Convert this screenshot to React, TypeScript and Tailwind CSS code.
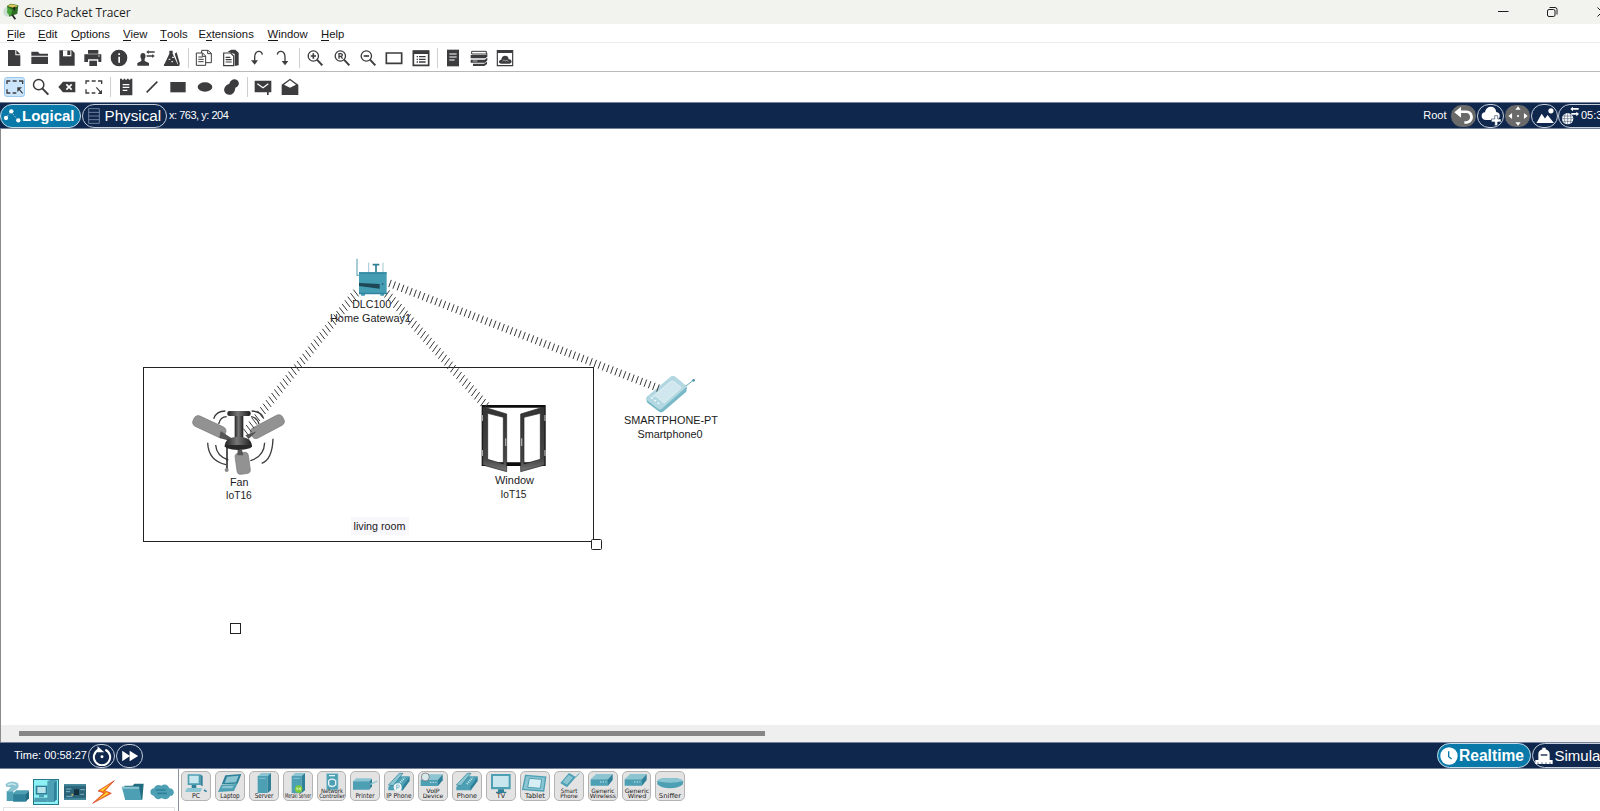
import React from "react";

type Kids = { children: React.ReactNode };
const DARK = "#3c3c3f";

function Tool({ children, active }: Kids & { active?: boolean }) {
  return (
    <div className="flex w-[26.3px] shrink-0 items-center justify-center">
      <div className={active ? "flex rounded-[3px] border border-[#9cc8ee] bg-[#cbe5fb] px-[0.5px]" : "flex"}>
        <svg width="18" height="18" viewBox="0 0 54 54" fill={DARK} stroke="none">{children}</svg>
      </div>
    </div>
  );
}
const Sep = () => <div className="ml-[3px] mr-[2px] h-[20px] w-px shrink-0 bg-[#cfcfcf]" />;

function Lens({ children }: Kids) {
  return (
    <g fill="none" stroke={DARK} strokeWidth="4">
      <circle cx="22" cy="21" r="15.5" />
      <path d="M33 32L49 49" strokeWidth="6" />
      {children}
    </g>
  );
}

const Person = () => (
  <>
    <path d="M1 50V42l12-6V30c-5-8-3-18 5-18s10 10 5 18v6l13 6v8z" />
    <path d="M28 9l7-6v4h18v4H35v4zM53 21l-7-6v4H29v4h17v4z" />
  </>
);

function TopTools() {
  return (
    <div className="flex h-[29px] items-center border-b border-[#b9b9b9] pl-[1px] pt-px">
      <Tool><path d="M9 3h22v16h15v32H9z" /><path d="M34 3l12 13H34z" /></Tool>
      <Tool><path d="M1 8h20l5 6h25v6H1zM1 23h50v22H1z" /></Tool>
      <Tool><path d="M4 4h38l8 8v38H4z" /><path d="M15 4h25v18H15z" fill="#fff" /><path d="M28 5h9v13h-9z" /></Tool>
      <Tool>
        <path d="M12 3h31v11H12zM1 16h51v23H43v-8H12v8H1z" /><path d="M16 35h23v16H16z" />
        <circle cx="45" cy="21" r="2" fill="#fff" />
      </Tool>
      <Tool><circle cx="27" cy="27" r="25" /><path d="M25 23h5v18h-5zM25 13h5v5h-5z" fill="#fff" /></Tool>
      <Tool><Person /></Tool>
      <Tool>
        <path d="M2 50L19 14V5h10v9l17 36z" /><path d="M35 14l6-4 10 36-5 2z" />
        <path d="M3 46h46v5H3z" /><path d="M17 31l5 0M27 25h6M25 38h5" stroke="#fff" strokeWidth="3" />
      </Tool>
      <Sep />
      <Tool>
        <g fill="#fff" stroke={DARK} strokeWidth="3">
          <path d="M20 4h19l10 9v28H20z" /><path d="M4 12h19l9 9v28H4z" />
          <path d="M10 24h13M10 31h16M10 38h16M38 5v9h10M22 13v9h9" fill="none" />
        </g>
      </Tool>
      <Tool>
        <path d="M17 8l11-6h12l10 9v38l-12 2V15z" />
        <g fill="#fff" stroke={DARK} strokeWidth="3.5"><path d="M5 12h21l9 9v29H5z" /><path d="M11 25h14M11 32h18M11 39h18" /></g>
      </Tool>
      <Tool><path d="M20 41V25C20 3 42 2 43 17" fill="none" stroke={DARK} strokeWidth="4" /><path d="M9 34h21L20 47z" /></Tool>
      <Tool><path d="M10 17C11 2 33 3 33 25v15" fill="none" stroke={DARK} strokeWidth="4" /><path d="M23 36h20L33 49z" /></Tool>
      <Sep />
      <Tool><Lens><path d="M22 13v16M14 21h16" strokeWidth="5" /></Lens></Tool>
      <Tool><Lens><path d="M18 29V14h5q5 0 5 4t-5 4h-4m4 0l6 7" /></Lens></Tool>
      <Tool><Lens><path d="M14 21h16" strokeWidth="5" /></Lens></Tool>
      <Tool><path d="M4 12h46v31H4z" fill="none" stroke={DARK} strokeWidth="5" /></Tool>
      <Tool>
        <path d="M4 6h46v43H4z" fill="none" stroke={DARK} strokeWidth="5" /><path d="M4 5h46v10H4z" />
        <path d="M14 23h4M21 23h20M14 31h4M21 31h20M14 39h4M21 39h20" stroke={DARK} strokeWidth="4" />
      </Tool>
      <Sep />
      <Tool><path d="M9 2h36v50H9z" /><path d="M16 15h22M16 24h22M16 33h16" stroke="#fff" strokeWidth="3.5" /></Tool>
      <Tool>
        <path d="M5 7h44v8H5z" fill="#fff" stroke={DARK} strokeWidth="3" />
        <path d="M2 18h46l4-7v12l-6 5H2zM2 32h42l8-6v8l-7 7H2zM9 44h33l9-6v7l-8 6H9z" />
        <path d="M8 36h14" stroke="#fff" strokeWidth="2" />
      </Tool>
      <Tool>
        <path d="M4 5h46v45H4z" fill="none" stroke={DARK} strokeWidth="3.5" /><path d="M4 4h46v8H4z" />
        <path d="M16 44c-10 0-9-12 0-12 0-15 22-15 22-1 11-1 12 13 1 13z" />
        <path d="M20 36q4-7 8 0m0 0q6-6 9 2" stroke="#fff" strokeWidth="1.5" fill="none" />
      </Tool>
    </div>
  );
}

const Marquee = ({ open }: { open?: boolean }) => (
  <g fill="none" stroke={DARK} strokeWidth="4">
    <path d="M3 18v-9h10M20 9h12M39 9h11v9M3 34v11h10M20 45h11" />
    <path d={open ? "M34 28L49 45" : "M37 31L50 46"} strokeWidth="3.5" />
    <path d={open ? "M51 35v13H38z" : "M34 42V28h14z"} fill={DARK} stroke="none" />
  </g>
);

function DrawTools() {
  return (
    <div className="flex h-[30px] items-center pl-[1.5px]">
      <Tool active><Marquee /></Tool>
      <Tool><g fill="none" stroke={DARK} strokeWidth="4.5"><circle cx="20" cy="20" r="15.5" /><path d="M31 31L49 50" strokeWidth="6" /></g></Tool>
      <Tool><path d="M1 27L15 11h37v32H15z" /><path d="M25 19l16 16M41 19L25 35" stroke="#fff" strokeWidth="5" /></Tool>
      <Tool><Marquee open /></Tool>
      <Sep />
      <Tool><path d="M9 2h6v3h5V2h5v3h5V2h5v3h5V2h6v50H9z" /><path d="M17 20h20M17 28h20M17 37h14" stroke="#fff" strokeWidth="3.5" /></Tool>
      <Tool><path d="M11 43L43 11" stroke={DARK} strokeWidth="5" /></Tool>
      <Tool><path d="M4 12h46v31H4z" /></Tool>
      <Tool><ellipse cx="27" cy="27" rx="22" ry="14" /></Tool>
      <Tool><path d="M22 17C25 5 38 0 46 7s5 19-6 22c-1 17-14 26-27 19C1 40 6 21 22 17z" /></Tool>
      <Sep />
      <Tool><path d="M2 8h50v35h-8v8h-5v-8H2z" /><path d="M10 17l17 12 16-12" fill="none" stroke="#fff" strokeWidth="3.5" /></Tool>
      <Tool><path d="M2 20L27 2l25 18v31H2z" /><path d="M9 20L27 7l18 13-18 9z" fill="#fff" /></Tool>
    </div>
  );
}

const MENU: [string, string][] = [
  ["File", "w-[31px]"], ["Edit", "w-[33px]"], ["Options", "w-[52px]"], ["View", "w-[37px]"],
  ["Tools", "w-[38.5px]"], ["Extensions", "w-[69px]"], ["Window", "w-[53.5px]"], ["Help", "w-[40px]"],
];

const Key = ({ children }: Kids) => <span className="inline-block border-b border-[#151515] leading-[12px]">{children}</span>;

function Round({ children, gray }: Kids & { gray?: boolean }) {
  return (
    <div className={"flex h-[24px] w-[27px] shrink-0 items-center justify-center rounded-full border " + (gray ? "border-[#0f274c] bg-[#6a6a6a]" : "border-[#c3cddb]")}>
      <svg width="20" height="20" viewBox="3 3 54 54" fill="#fff" className="shrink-0">{children}</svg>
    </div>
  );
}

function NavBar() {
  return (
    <div className="flex h-[27px] items-center border-y border-[#76819a] bg-[#0f274c] text-white">
      <div className="flex h-[24px] w-[80.5px] shrink-0 items-center rounded-full border border-[#c6dbe8] bg-[#0879a8] pl-[2px]">
        <svg width="19" height="18" viewBox="0 0 57 54" className="shrink-0" fill="#fff">
          <path d="M8 34L24 13l21 28" fill="none" stroke="#fff" strokeWidth="2" strokeDasharray="4 5" />
          <circle cx="9" cy="33" r="6.5" /><circle cx="25" cy="13" r="6.5" /><circle cx="46" cy="40" r="6.5" />
        </svg>
        <span className="text-[15px] font-bold">Logical</span>
      </div>
      <div className="ml-[1.5px] flex h-[24px] w-[84.5px] shrink-0 items-center rounded-full border border-[#c3cddb] pl-[5px]">
        <svg width="12" height="18" viewBox="0 0 36 54" fill="none" stroke="#7f92b0" strokeWidth="2.5">
          <path d="M2 5h32v44H2zM2 16h32M2 27h32M2 38h32" />
        </svg>
        <span className="ml-[4.5px] text-[15.2px]">Physical</span>
      </div>
      <span className="ml-[2.5px] whitespace-nowrap text-[11px] tracking-[-0.48px]">x: 763, y: 204</span>
      <span className="ml-auto mr-[3.5px] text-[11px]">Root</span>
      <div className="flex w-[150px] shrink-0">
        <Round gray>
          <path d="M4 20L22 5v10h14c24 0 24 36 0 36h-5v-7h5c14 0 14-22 0-22H22v13z" />
        </Round>
        <Round>
          <path d="M17 41C1 41 1 20 14 20 16 0 43 0 44 19c15 2 11 22-1 22z" />
          <path d="M40 29h8v9h9v8h-9v10h-8V46h-9v-8h9z" stroke="#0f274c" strokeWidth="1.5" />
        </Round>
        <Round gray>
          <path d="M30 4l7 9H23zM30 56l7-9H23zM4 30l10-8v16zM56 30l-10-8v16z" />
          <circle cx="30" cy="30" r="3" />
        </Round>
        <Round>
          <path d="M7 49l14-25 9 13 7-10 17 22z" /><circle cx="46" cy="16" r="7" />
        </Round>
        <div className="flex h-[24px] w-[100px] shrink-0 items-center rounded-full border border-[#c3cddb] pl-[2px]">
          <svg width="18" height="20" viewBox="0 0 54 60" className="shrink-0">
            <circle cx="20" cy="38" r="17" fill="#fff" />
            <path d="M3 38h34M6 30h28M6 46h28M20 21v34M13 22q-7 16 0 31M27 22q7 16 0 31" stroke="#0f274c" strokeWidth="1.3" fill="none" />
            <path d="M28 9l8-7v4h17v5H36v5zM54 24l-8-7v4H31v5h15v5z" fill="#fff" />
          </svg>
          <span className="ml-[2px] text-[11px]">05:31:00</span>
        </div>
      </div>
    </div>
  );
}

type Wire = { from: [number, number]; to: [number, number]; lean: [number, number] };

const WIRES: Wire[] = [
  { from: [390, 283.5], to: [658, 388], lean: [1.3, -3.6] },
  { from: [387, 294], to: [486, 406], lean: [2.6, -3.6] },
  { from: [356, 293], to: [246, 432], lean: [2.6, 3.4] },
];

function Cable({ from, to, lean }: Wire) {
  const length = Math.hypot(to[0] - from[0], to[1] - from[1]);
  const count = Math.round(length / 4.5);
  let d = "";
  for (let i = 0; i <= count; i++) {
    const x = from[0] + ((to[0] - from[0]) * i) / count;
    const y = from[1] + ((to[1] - from[1]) * i) / count;
    d += `M${(x - lean[0]).toFixed(1)} ${(y - lean[1]).toFixed(1)}L${(x + lean[0]).toFixed(1)} ${(y + lean[1]).toFixed(1)}`;
  }
  return <path d={d} fill="none" stroke="#3a3a3a" strokeWidth="1" />;
}

function Label({ x, y, w, children }: Kids & { x: number; y: number; w: number }) {
  return (
    <text x={x - w / 2} y={y} textLength={w} lengthAdjust="spacingAndGlyphs" fontSize="11.3" fill="#1c1c1c">{children}</text>
  );
}

function Canvas() {
  return (
    <div className="h-[596px] overflow-hidden border-l border-[#8a8a8a] bg-white">
      <svg width="1599" height="596" viewBox="1 129 1599 596" className="block">
        <defs>
          <linearGradient id="pole"><stop offset="0" stopColor="#222" /><stop offset=".45" stopColor="#777" /><stop offset="1" stopColor="#1c1c1c" /></linearGradient>
          <linearGradient id="frame" x2="0" y2="1"><stop offset="0" stopColor="#333" /><stop offset=".8" stopColor="#444" /><stop offset="1" stopColor="#777" /></linearGradient>
        </defs>
        <rect x="143.5" y="367.5" width="450" height="174" fill="none" stroke="#222" />
        <rect x="351" y="517" width="58" height="18" fill="#f8f7fc" />
        <Label x={379.5} y={530} w={52}>living room</Label>

        <g transform="translate(180 400) scale(.3333)">
          <g fill="none" stroke="#3c3c3c" strokeWidth="4">
            <path d="M101 56q8-23 35-23M116 72q5-22 24-22M215 33q31 2 36 23M213 50q18 2 24 22M83 128q2 54 55 66M107 135q2 33 38 45M279 116q-2 62-34 74M254 128q-2 42-43 54" />
          </g>
          <path d="M164 48h26v66h-26z" fill="url(#pole)" />
          <rect x="142" y="33" width="70" height="15" rx="6" fill="url(#pole)" />
          <g fill="#929292" stroke="#777" strokeWidth="2">
            <rect x="-52" y="-17" width="104" height="34" rx="13" transform="translate(88 80) rotate(25)" />
            <rect x="-54" y="-17" width="108" height="34" rx="13" transform="translate(262 80) rotate(-28)" />
            <rect x="-20" y="-31" width="40" height="64" rx="11" transform="translate(188 189) rotate(-8)" />
          </g>
          <path d="M122 93l32 21-11 7-25-7zM230 94l-24 23-10-11zM173 149h13l4 17h-18z" fill="#555" />
          <path d="M134 141q0-31 41-31t41 31q-41 13-82 0z" fill="url(#pole)" />
          <path d="M138 135h74v9q-37 12-74 0z" fill="#292929" />
          <path d="M141 143v64" stroke="#333" strokeWidth="5" /><circle cx="140" cy="210" r="6" fill="#888" />
        </g>
        <Label x={239.3} y={485.5} w={18.5}>Fan</Label>
        <Label x={238.7} y={499.3} w={26}>IoT16</Label>

        <g transform="translate(460 390) scale(.3333)">
          <path d="M65 45h192v183H65zM76 53v164h171V53z" fill="#0d0d0d" fillRule="evenodd" />
          <path d="M68 50l72 22v173l-72-20zM83 70v138l47 14V82zM254 50l-72 22v173l72-20zM241 70v138l-49 14V82z" fill="url(#frame)" stroke="#222" strokeWidth="2" fillRule="evenodd" />
          <path d="M137 145v23M185 145v23M67 75v18M67 180v18M255 75v18M255 180v18" stroke="#aaa" strokeWidth="4" />
        </g>
        <Label x={514.5} y={484.3} w={39}>Window</Label>
        <Label x={513.5} y={498} w={26}>IoT15</Label>

        <g transform="translate(340 250) scale(.3333)">
          <path d="M51 26v50h12" fill="none" stroke="#7db4c4" strokeWidth="4" />
          <path d="M86 38v30M129 38v30" stroke="#8bbbc8" strokeWidth="2.5" />
          <path d="M98 44h20M108 44v24" stroke="#2f7f96" strokeWidth="5" />
          <path d="M57 67h83v65h-8v5h-11v-5H75v5H63v-5h-6z" fill="#459db4" />
          <path d="M57 67h83v4H57zM57 128h83v5H57z" fill="#2f86a0" />
          <path d="M57 99l62 3v14l-62-8z" fill="#1d4754" /><circle cx="128" cy="102" r="2.5" fill="#1d4754" />
        </g>
        <Label x={371.7} y={307.7} w={39}>DLC100</Label>
        <Label x={370.5} y={321.5} w={81}>Home Gateway1</Label>

        <g transform="translate(610 360) scale(.3333)">
          <path d="M225 80l25-19" stroke="#63a4b5" strokeWidth="3" /><circle cx="251" cy="61" r="4" fill="#4d91a4" />
          <path d="M110 112L182 51q6-4 14 0l33 28q4 5 0 16l-70 60q-8 4-14-2l-32-24q-5-5-3-19z" fill="#78b8c7" />
          <path d="M113 110L182 50q6-4 13 0l31 26q5 4 0 8l-71 63q-5 4-10 0l-32-25q-5-5 0-12z" fill="#b3d8e2" />
          <path d="M134 105l48-40q5-3 10 0l19 15q4 3 0 6l-49 43z" fill="#d0e7ed" stroke="#eff8fa" strokeWidth="2" />
          <path d="M123 112l5 4M133 120l5 4M143 128l5 4M129 107l4 3" stroke="#f3fbfd" strokeWidth="4" />
        </g>
        <Label x={671} y={424} w={94}>SMARTPHONE-PT</Label>
        <Label x={670} y={437.5} w={65}>Smartphone0</Label>

        {WIRES.map((wire) => <Cable key={wire.to.join()} {...wire} />)}
        <g fill="#fff" stroke="#222"><rect x="591.5" y="539.5" width="10" height="10" rx="1" /><rect x="230.5" y="623.5" width="10" height="10" /></g>
      </svg>
    </div>
  );
}

const T1 = "#4d9fb4", T2 = "#2f8199", T3 = "#8cc5d2";

function StatusBar() {
  return (
    <div className="flex h-[27px] items-center border-y border-[#76819a] bg-[#0f274c] pl-[14px] text-white">
      <span className="w-[74px] shrink-0 whitespace-nowrap text-[11px]">Time: 00:58:27</span>
      <Round>
        <path d="M21 13a22 22 0 1 0 18 0" fill="none" stroke="#fff" strokeWidth="5.5" />
        <path d="M18 4v16h18z" /><circle cx="30" cy="32" r="4" />
      </Round>
      <div className="ml-[1px] flex">
        <Round><path d="M9 16l21 14L9 44zM29 16l23 14-23 14z" /></Round>
      </div>
      <div className="ml-auto flex w-[163px] shrink-0">
        <div className="flex h-[25px] w-[93.5px] shrink-0 items-center rounded-full border border-[#c6dbe8] bg-[#0879a8] pl-[2px]">
          <svg width="18" height="18" viewBox="0 0 54 54" className="shrink-0"><circle cx="27" cy="27" r="26" fill="#fff" /><path d="M26 13v16l9 7" stroke="#0879a8" strokeWidth="4" fill="none" /></svg>
          <span className="ml-[1px] text-[15.6px] font-bold">Realtime</span>
        </div>
        <div className="ml-[1.5px] flex h-[25px] w-[110px] shrink-0 items-center rounded-full border border-[#c3cddb] pl-[2px]">
          <svg width="18" height="18" viewBox="0 0 54 54" className="shrink-0" fill="#fff">
            <path d="M22 2h10v5c7 2 12 7 12 14v18H10V21C10 14 15 9 22 7zM1 39h52v12H1z" />
            <path d="M17 24h20" stroke="#0f274c" strokeWidth="4" />
            <path d="M9 46v6M21 46v6M33 46v6M45 46v6" stroke="#0f274c" strokeWidth="2" />
          </svg>
          <span className="ml-[1.5px] text-[15px]">Simulation</span>
        </div>
      </div>
    </div>
  );
}

const Box3D = () => <><path d="M6 31l16-16h50l-14 16z" fill={T3} /><path d="M6 31h52v19H6z" fill={T1} /><path d="M58 31l14-16v18L58 50z" fill={T2} /><path d="M34 39h4M42 39h4M50 39h3" stroke="#d5edf2" strokeWidth="3" /></>;
const Tower = () => <><path d="M24 13l11-9h29l-10 9z" fill={T3} /><path d="M24 13h30v51H24z" fill={T1} /><path d="M54 13l10-9v52l-10 8z" fill={T2} /><path d="M29 20h19" stroke={T3} strokeWidth="3" /></>;
const Handset = () => <><path d="M11 46L42 14h33L53 56H11z" fill={T1} /><path d="M53 46l22-32v14L53 58z" fill={T2} /><path d="M11 40L44 5h11L25 42z" fill={T3} stroke={T2} strokeWidth="2" /><path d="M43 37l17-19" stroke="#c9e8ee" strokeWidth="6" strokeDasharray="3 3" /></>;

const DEVICES: { lines: string[]; w: number[]; art: React.ReactNode }[] = [
  { lines: ["PC"], w: [24], art: <><path d="M18 8h38v32H18z" fill={T1} /><path d="M23 12h28v23H23z" fill="#c7e6ed" /><path d="M56 8l7 5v31l-7-4zM30 40h14v9H30z" fill={T2} /><path d="M16 49h46l-6 12H10z" fill={T3} /><path d="M67 55l8 5" stroke={T2} strokeWidth="5" /></> },
  { lines: ["Laptop"], w: [58], art: <><path d="M29 11l48-4-11 29-48 2z" fill={T2} /><path d="M34 15l35-3-8 20-34 2z" fill={T3} /><path d="M17 39l48-2-10 21-48 3z" fill={T1} /><path d="M22 43l32-1-4 8H17z" fill={T3} /></> },
  { lines: ["Server"], w: [56], art: <Tower /> },
  { lines: ["Meraki Server"], w: [78], art: <><Tower /><circle cx="45" cy="52" r="11" fill="#7ccb35" /><path d="M40 56v-8l5 5 5-5v8" fill="none" stroke="#fff" strokeWidth="2" /></> },
  { lines: ["Network", "Controller"], w: [66, 77], art: <><path d="M27 6h34v48H27z" fill={T1} stroke={T3} strokeWidth="2" /><path d="M34 12h18M34 26q9-7 19 0M34 41q10 7 19 0M33 26v15M54 26v15" fill="none" stroke="#e6f4f7" strokeWidth="4" /></> },
  { lines: ["Printer"], w: [57], art: <><path d="M7 29l10-9h46l-7 9z" fill={T3} /><path d="M7 29h49v25H7z" fill={T1} /><path d="M56 29l8-8v23l-8 10z" fill={T2} /><path d="M59 38l21-10" stroke={T3} strokeWidth="4" /></> },
  { lines: ["IP Phone"], w: [76], art: <><Handset /><circle cx="39" cy="47" r="12" fill="#edf5f7" /><path d="M36 54V40h6q5 4 0 8h-5" fill="none" stroke={T1} strokeWidth="2" /></> },
  { lines: ["VoIP", "Device"], w: [40, 62], art: <g transform="translate(0 -7)"><Box3D /><circle cx="20" cy="23" r="12" fill="#d7e8ec" stroke="#666" strokeWidth="2" /></g> },
  { lines: ["Phone"], w: [61], art: <Handset /> },
  { lines: ["TV"], w: [25], art: <><path d="M13 7h59v46H13z" fill={T1} /><path d="M19 13h47v33H19z" fill="#c7e6ed" /><path d="M34 53h18v7h7v4H28v-4h6z" fill={T2} /></> },
  { lines: ["Tablet"], w: [60], art: <><path d="M15 11l60 5-6 42-63-5z" fill={T3} stroke={T1} strokeWidth="4" /><path d="M26 20l37 3-4 27-38-3z" fill="#d7eff4" stroke={T1} strokeWidth="3" /></> },
  { lines: ["Smart", "Phone"], w: [50, 52], art: <><path d="M17 34L43 4l21 12-27 31z" fill={T1} /><path d="M24 31l18-21 13 7-18 22z" fill={T3} /><path d="M62 17l12-12" stroke={T1} strokeWidth="3" /></> },
  { lines: ["Generic", "Wireless"], w: [70, 79], art: <g transform="translate(0 -8)"><Box3D /></g> },
  { lines: ["Generic", "Wired"], w: [74, 56], art: <g transform="translate(0 -8)"><Box3D /></g> },
  { lines: ["Sniffer"], w: [67], art: <><path d="M5 29q2-10 37-10t40 10v9q-13 12-39 12T5 38z" fill={T1} /><path d="M5 29q2-10 37-10t40 10q-38 8-77 0z" fill={T3} /></> },
];

function DeviceTile({ lines, w, art }: { lines: string[]; w: number[]; art: React.ReactNode }) {
  const single = lines.length === 1;
  return (
    <div className="mr-[4px] h-[30px] w-[29.9px] shrink-0 overflow-hidden rounded-[5px] border border-[#b3b3b3] bg-[#e3e3e3]">
      <svg width="28" height="28" viewBox="1 1 84 84" className="block" fontFamily="DejaVu Sans, sans-serif">
        {art}
        {lines.map((line, i) => (
          <text key={line} x={43 - w[i] / 2} y={single ? 78 : 63.5 + i * 16} fontSize={single ? 20 : 18} textLength={w[i]} lengthAdjust="spacingAndGlyphs" fill="#202020">{line}</text>
        ))}
      </svg>
    </div>
  );
}

function Category({ children, active }: Kids & { active?: boolean }) {
  return (
    <div className={"flex h-[26px] w-[26px] shrink-0 items-center justify-center " + (active ? "border border-[#24788a] bg-[#8df0f4]" : "")}>
      <svg width="24" height="24" viewBox="0 0 72 72" className="shrink-0">{children}</svg>
    </div>
  );
}

function DevicePanel() {
  return (
    <div className="flex h-[42px] bg-white">
      <div className="flex w-[179px] shrink-0 flex-col border-r border-[#8a929e]">
        <div className="mt-[8px] flex h-[29px] items-center gap-[3.1px] pl-[4px]">
          <Category>
            <path d="M24 40l10-9h38l-8 11v22H24z" fill={T1} /><path d="M24 43h38v22H24z" fill={T2} /><path d="M62 43l10-11v23l-10 10z" fill="#236b80" />
            <path d="M2 12Q18-2 38 9q7 12-3 19l-13 7H5l13-13-15-2z" fill={T3} /><path d="M5 34h20v29H5z" fill={T1} /><path d="M8 15q14-7 25 1" stroke="#d5edf2" strokeWidth="4" fill="none" />
          </Category>
          <Category active>
            <path d="M40 4l8-4h20v58l-8 8H40z" fill={T1} /><path d="M60 10l8-8v56l-8 8z" fill={T2} />
            <path d="M5 17h35v27H5z" fill={T2} /><path d="M10 21h25v18H10z" fill="#b9e3ea" /><path d="M15 44h15v8H15zM2 53h42l-5 13H0z" fill={T1} />
          </Category>
          <Category>
            <path d="M3 13h66v46H3z" fill="#2b6379" /><path d="M3 13h66v6H3zM3 53h66v6H3z" fill="#3c8299" />
            <path d="M33 28h15v17H33z" fill="#14303d" /><path d="M9 27h16M9 35h12M52 29h14M52 43h11M10 49h18" stroke="#80b8c7" strokeWidth="3" /><circle cx="28" cy="44" r="3" fill="#d8ad48" />
          </Category>
          <Category>
            <path d="M67 2L18 33l18 6L2 70l56-30-19-8z" fill="#f07818" stroke="#d93822" strokeWidth="2" /><path d="M54 13L25 31l20 5-28 23 33-19-17-8z" fill="#ffdf32" />
          </Category>
          <Category>
            <path d="M10 17h25l5-6h28l-4 48H12z" fill="#236b80" />
            <path d="M2 20h52l8 40H13z" fill={T1} /><path d="M2 20h52l1 6H4z" fill={T3} />
          </Category>
          <Category>
            <path d="M12 48C-4 45-1 25 12 25 16 12 29 14 34 17c11-8 22 0 24 8 17 0 18 23 2 23-5 12-19 11-25 6-7 6-20 4-23-6z" fill={T1} />
            <path d="M17 30h30M22 40h29" stroke={T2} strokeWidth="5" />
          </Category>
        </div>
        <div className="mx-[3px] mt-[1px] h-[4px] border-x border-t border-[#e3e3e3]" />
      </div>
      <div className="flex pl-[2px] pt-[2px]">
        {DEVICES.map((d) => <DeviceTile key={d.lines.join(" ")} {...d} />)}
      </div>
    </div>
  );
}

export default function App() {
  return (
    <div className="flex h-[811px] w-[1600px] flex-col overflow-hidden bg-white font-['Liberation_Sans',Arial,sans-serif] leading-none">
      <header className="flex h-[24px] shrink-0 items-center bg-[#f2f3ee]">
        <svg width="16" height="18" viewBox="0 0 48 54" className="ml-[3px] shrink-0">
          <ellipse cx="15" cy="26" rx="14" ry="15" fill="#c9ddd0" /><path d="M12 8l12-6 22 5-3 25-24 9z" fill="#2e6b25" />
          <path d="M13 9l12-5 20 4-10 7z" fill="#e5c85b" /><path d="M14 13l14 8-5 18-11-10z" fill="#46a436" /><path d="M28 15l10-5-3 14z" fill="#1c2618" />
          <path d="M28 36l9 13" stroke="#222" strokeWidth="5" />
        </svg>
        <h1 className="ml-[5px] whitespace-nowrap pt-px font-['Open_Sans',sans-serif] text-[12px] tracking-[-0.08px] text-[#1e1e1e]">Cisco Packet Tracer</h1>
        <svg width="120" height="24" viewBox="1480 0 120 24" className="ml-auto" fill="none" stroke="#1e1e1e">
          <path d="M1498 11.5h10.5M1597.5 7.5l9 9M1597.5 16.5l9-9" />
          <rect x="1547.5" y="9.5" width="7.5" height="7" rx="1.5" /><path d="M1549.5 7.5h5.5q2 0 2 2v5" />
        </svg>
      </header>
      <nav className="flex h-[19px] shrink-0 items-center border-b border-[#ececec] pl-[7px] pt-[3px] text-[11.3px] text-[#151515]">
        {MENU.map(([name, width]) => (
          <span key={name} className={width + " shrink-0 whitespace-nowrap"}>
            {name === "Extensions" ? <>E<Key>x</Key>tensions</> : <><Key>{name[0]}</Key>{name.slice(1)}</>}
          </span>
        ))}
      </nav>
      <div className="shrink-0"><TopTools /></div>
      <div className="shrink-0"><DrawTools /></div>
      <div className="shrink-0"><NavBar /></div>
      <div className="shrink-0"><Canvas /></div>
      <div className="flex h-[17px] shrink-0 items-center border-l border-[#8a8a8a] bg-[#efefef] pl-[18px]">
        <div className="h-[5px] w-[746px] bg-[#868686]" />
      </div>
      <div className="shrink-0"><StatusBar /></div>
      <DevicePanel />
    </div>
  );
}
